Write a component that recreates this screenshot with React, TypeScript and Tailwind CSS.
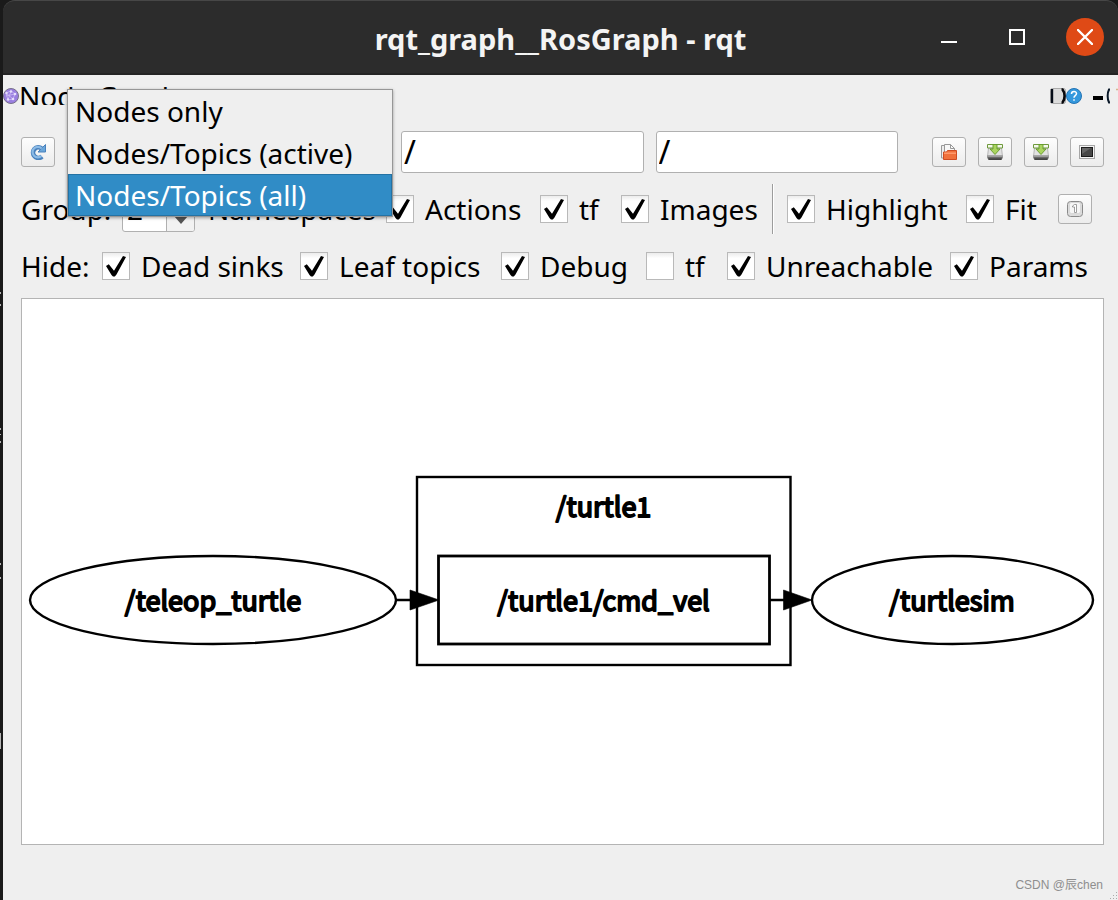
import React from "react";

const TEXT = "font-['Noto_Sans','Open_Sans',sans-serif] text-[28px] leading-[42px]";

const BUTTON =
  "flex h-[30px] w-[34px] shrink-0 items-center justify-center rounded-[3px] border border-[#b0b0b0] bg-linear-to-b from-[#fdfdfd] to-[#ececec]";

function Check({ label, checked = true }: { label: string; checked?: boolean }) {
  return (
    <label className="flex items-center gap-[11px] whitespace-nowrap">
      <span className="grid size-7 shrink-0">
        <input
          type="checkbox"
          defaultChecked={checked}
          className="peer col-start-1 row-start-1 size-7 appearance-none border border-[#b9b9b9] bg-white bg-linear-to-b from-[#ececec] to-white to-20%"
        />
        <svg
          viewBox="0 0 28 28"
          className="pointer-events-none invisible col-start-1 row-start-1 size-7 peer-checked:visible"
          aria-hidden="true"
        >
          <path d="M4 14 6.800 12.200 12 18.800 21 4 24 5 14.500 22.500 12.800 24.500 11 24.500 9.500 23z" fill="#000" />
        </svg>
      </span>
      {label}
    </label>
  );
}

function SaveIcon() {
  return (
    <svg viewBox="0 0 16 16" className="size-4" aria-hidden="true">
      <path d="M1.500 4h13l1 8.500H.5z" fill="#e2e2e2" stroke="#aaa" strokeWidth=".8" />
      <path d="M.5 .5h15v3.500H.5z" fill="#f4f8ec" stroke="#6f9a3c" />
      <path d="M.3 11.500h15.400V14L14.500 15.800h-13L.3 14z" fill="#6a6a6a" />
      <path d="M.3 11.300h15.400v1.500H.3z" fill="#a8a8a8" />
      <path d="M1.500 14.500h13v1.300h-13z" fill="#333" />
      <path d="M6 .5h4v4.500h3L8 10.500 3 5h3z" fill="#a9d45f" stroke="#659a2a" strokeWidth=".9" />
    </svg>
  );
}

function Title() {
  return (
    <header className="flex h-[75px] items-center rounded-t-[12px] border-t border-b-2 border-t-[#474747] border-b-[#242424] bg-[#2c2c2c] pr-[14px]">
      <span className="w-[177px] shrink" />
      <h1 className="flex-1 pt-1 text-center font-['Noto_Sans','Open_Sans',sans-serif] text-[29px] leading-9 font-bold whitespace-nowrap text-[#f4f4f4]">
        rqt_graph__RosGraph - rqt
      </h1>
      <div className="flex items-center">
        <button aria-label="Minimize" className="size-4">
          <svg viewBox="0 0 16 16" className="size-4"><path d="M0 12h16v2H0z" fill="#fff" /></svg>
        </button>
        <button aria-label="Maximize" className="ml-[52px] size-4">
          <svg viewBox="0 0 16 16" className="size-4"><path d="M1 1h14v14H1z" fill="none" stroke="#fff" strokeWidth="2" /></svg>
        </button>
        <button aria-label="Close" className="ml-[41px] flex size-[38px] items-center justify-center rounded-full bg-[#df4a16]">
          <svg viewBox="0 0 16 16" className="size-4"><path d="M1 1l14 14M15 1 1 15" stroke="#fff" strokeWidth="2.4" strokeLinecap="round" /></svg>
        </button>
      </div>
    </header>
  );
}

function Dock() {
  return (
    <div className="flex h-[42px] items-center">
      <svg viewBox="0 0 16 16" className="size-4 shrink-0" aria-hidden="true">
        <circle cx="8" cy="8" r="7.500" fill="#9a7fe0" stroke="#77708a" />
        <path d="M3 5 8 3l4 3-2 5-5 1zM3 5l7 6M8 3l-3 9M12 6 3 8" fill="none" stroke="#cdbdf4" strokeWidth=".8" />
        <g fill="#e6defc"><circle cx="3.500" cy="5" r="1.200" /><circle cx="8" cy="3.500" r="1.200" /><circle cx="12" cy="6" r="1.300" /><circle cx="10" cy="11" r="1.300" /><circle cx="5" cy="11.500" r="1.200" /></g>
      </svg>
      <div className="flex h-[18px] flex-1 items-center overflow-hidden">
        <span className={TEXT}>Node Graph</span>
      </div>
      <button aria-label="Reload" className="size-4">
        <svg viewBox="0 0 16 16" className="size-4">
          <rect x=".5" y=".5" width="15" height="15" rx="2" fill="#dcdcdc" stroke="#aaa" />
          <path d="M2 1v14" stroke="#060c18" strokeWidth="2.400" />
          <path d="M11.500 1.500h1c2.800 3.500 2.800 9.500 0 13h-1" fill="none" stroke="#08080c" strokeWidth="2.600" />
        </svg>
      </button>
      <button aria-label="Help" className="size-4">
        <svg viewBox="0 0 16 16" className="size-4">
          <circle cx="8" cy="8" r="7.500" fill="#3498dd" stroke="#2474b4" />
          <path d="M5.500 6c0-3.400 5-3.200 5-.4C10.500 7.600 8 7.700 8 9.800M8 11.200v1.600" fill="none" stroke="#fff" strokeWidth="1.500" />
        </svg>
      </button>
      <button aria-label="Dock options" className="ml-[11px] h-4 w-[25px]">
        <svg viewBox="0 0 25 16" className="h-4 w-[25px]">
          <path d="M0 8h10v4H0z" fill="#000" />
          <path d="M17 1.500h-1c-1.800 3.500-1.800 9.500 0 13h1" fill="none" stroke="#0a1828" strokeWidth="2" />
          <path d="M23 1.500h2" stroke="#d8b48c" strokeWidth="1.500" />
        </svg>
      </button>
    </div>
  );
}

const MODES = ["Nodes only", "Nodes/Topics (active)", "Nodes/Topics (all)"];

function ModeSelect() {
  return (
    <div className="relative w-[322px] shrink-0">
      <select aria-label="Graph type" defaultValue={MODES[2]} className="h-[42px] w-full rounded-[3px] border border-[#b0b0b0] bg-[#f6f6f6] px-2">
        {MODES.map((m) => <option key={m}>{m}</option>)}
      </select>
      <ul role="listbox" className="absolute -top-[42px] left-0 z-10 w-[326px] border border-[#979797] bg-[#efefef] leading-10 shadow-[0_1px_3px_rgba(0,0,0,0.35)]">
        <li role="option" aria-selected="false" className="h-[42px] border border-transparent px-[6px]">{MODES[0]}</li>
        <li role="option" aria-selected="false" className="h-[42px] border border-transparent px-[6px]">{MODES[1]}</li>
        <li role="option" aria-selected="true" className="h-[42px] border border-[#2472a4] bg-[#308cc6] px-[6px] text-white">{MODES[2]}</li>
      </ul>
    </div>
  );
}

function Toolbar() {
  const field = "h-[42px] w-full min-w-0 flex-1 rounded-[3px] border border-[#b0b0b0] bg-white px-[2px] text-[32px]";
  return (
    <div className="flex items-center gap-3">
      <button aria-label="Refresh" className={BUTTON}>
        <svg viewBox="0 0 16 16" className="size-4">
          <path d="M12 12.500A5.300 5.300 0 1 1 11.700 4.500" fill="none" stroke="#4a82bd" strokeWidth="4.600" />
          <path d="M15.500.500v7.500H8z" fill="#6aa6da" stroke="#4a82bd" />
          <path d="M11.500 12A5.300 5.300 0 1 1 11.700 4.500" fill="none" stroke="#8cbbe6" strokeWidth="2.200" />
        </svg>
      </button>
      <ModeSelect />
      <input aria-label="Node filter" defaultValue="/" className={field} />
      <input aria-label="Topic filter" defaultValue="/" className={field} />
      <div className="ml-[22px] flex gap-3">
        <button aria-label="Load dot file" className={BUTTON}>
          <svg viewBox="0 0 16 16" className="size-4">
            <path d="M.5 1.500h5V14h-5z" fill="#eee" stroke="#999" />
            <path d="M3.500 .5h6l4 4v6h-10z" fill="#f8f8f8" stroke="#999" />
            <path d="M9.500.500V4.500h4" fill="none" stroke="#999" />
            <path d="M2.500 15.500V8h3l1-1.500h9v9z" fill="#f0713c" stroke="#cf4c22" />
            <path d="M3 8.500h12V10H3z" fill="#ff9a6c" />
          </svg>
        </button>
        <button aria-label="Save as dot" className={BUTTON}><SaveIcon /></button>
        <button aria-label="Save as SVG" className={BUTTON}><SaveIcon /></button>
        <button aria-label="Save as image" className={BUTTON}>
          <svg viewBox="0 0 16 16" className="size-4">
            <rect x=".5" y="1.500" width="15" height="13" fill="#f4f4f4" stroke="#a6a6a6" />
            <rect x="2.500" y="3.500" width="11" height="9" fill="#474747" stroke="#1c1c1c" />
            <path d="M3 4h9L3 10z" fill="#666" />
          </svg>
        </button>
      </div>
    </div>
  );
}

function GroupRow() {
  return (
    <div className="grid h-[50px] grid-cols-[101px_86px_178px_154px_81px_151px_15px_179px_92px_1fr] items-center">
      <label htmlFor="depth">Group:</label>
      <div className="flex h-[46px] w-[73px] overflow-hidden rounded-[3px] border border-[#b0b0b0] bg-white">
        <input id="depth" defaultValue="2" className="min-w-0 flex-1 px-1" />
        <button aria-label="Decrease depth" className="flex w-7 items-end justify-center border-l border-[#b0b0b0] bg-[#f2f2f2] pb-[7px]">
          <svg viewBox="0 0 14 8" className="h-2 w-[14px]"><path d="M0 0h14L7 8z" fill="#555" /></svg>
        </button>
      </div>
      <span>Namespaces</span>
      <Check label="Actions" />
      <Check label="tf" />
      <Check label="Images" />
      <span className="h-[50px] w-[2px] border-l border-[#9c9c9c] bg-white" />
      <Check label="Highlight" />
      <Check label="Fit" />
      <button aria-label="Fit in view" className={BUTTON}>
        <svg viewBox="0 0 16 16" className="size-4">
          <rect x=".5" y=".5" width="15" height="15" rx="3" fill="#dcdcdc" stroke="#8a8a8a" />
          <rect x="2.500" y="1.500" width="11" height="11" rx="2" fill="#f6f6f6" stroke="#ccc" strokeWidth=".6" />
          <path d="M5.500 5 7.500 3.500h2v8h-2V6H5.500z" fill="#fff" stroke="#888" strokeWidth=".8" />
        </svg>
      </button>
    </div>
  );
}

function HideRow() {
  return (
    <div className="grid h-[42px] grid-cols-[81px_198px_201px_145px_81px_223px_1fr] items-center">
      <span>Hide:</span>
      <Check label="Dead sinks" />
      <Check label="Leaf topics" />
      <Check label="Debug" />
      <Check label="tf" checked={false} />
      <Check label="Unreachable" />
      <Check label="Params" />
    </div>
  );
}

function Graph() {
  return (
    <main className="flex min-h-0 flex-1 border border-[#b4b4b4] bg-white">
      <svg viewBox="22 299 1081 545" className="w-full" role="img" aria-label="ROS node graph">
        <g fill="none" stroke="#000" strokeWidth="2.4">
          <ellipse cx="213" cy="600" rx="183" ry="44" />
          <ellipse cx="952.500" cy="600" rx="140.500" ry="44" />
          <rect x="417" y="477" width="373.500" height="188" />
          <rect x="438.500" y="556" width="331" height="88" strokeWidth="2.800" />
          <path d="M396 600h16M770 600h16" />
        </g>
        <path d="M410 590 439 600 410 610zM783.500 590 812 600 783.500 610z" stroke="#000" strokeWidth=".6" />
        <g
          className="font-['Noto_Sans_CJK_SC',sans-serif] text-[27px]"
          textAnchor="middle"
          stroke="#000"
          strokeWidth="1.800"
          strokeLinejoin="round"
        >
          <text x="213" y="611">/teleop_turtle</text>
          <text x="603.500" y="517">/turtle1</text>
          <text x="603.500" y="611">/turtle1/cmd_vel</text>
          <text x="952" y="611">/turtlesim</text>
        </g>
      </svg>
    </main>
  );
}

export default function App() {
  return (
    <div className="flex min-h-screen bg-[#1a1a1a]">
      <svg viewBox="0 0 3 800" className="h-[800px] w-[3px] shrink-0" aria-hidden="true">
        <path d="M0 292h1v2H0zM0 304h1v2H0zM0 428h1v2H0zM0 434h1v1H0zM0 441h1v2H0zM0 563h1v2H0zM0 577h1v2H0zM0 733h1v16H0z" fill="#b4b4b4" />
      </svg>
      <div className={`flex min-w-0 flex-1 flex-col text-black ${TEXT}`}>
        <Title />
        <div className="flex flex-1 flex-col bg-[#efefef]">
          <Dock />
          <div className="flex flex-1 flex-col gap-[11px] pt-[14px] pr-[14px] pl-[18px]">
            <Toolbar />
            <GroupRow />
            <HideRow />
            <Graph />
          </div>
          <footer className="flex h-[55px] items-end justify-end">
            <span className="mr-[7px] mb-[7px] font-['Liberation_Sans','Noto_Sans_CJK_SC',sans-serif] text-[12px] leading-4 text-[#8e8e8e]">
              CSDN @辰chen
            </span>
            <svg viewBox="0 0 8 8" className="size-2" aria-hidden="true">
              <path d="M6 0h1v1H6zM3 3h1v1H3zM6 3h1v1H6zM0 6h1v1H0zM3 6h1v1H3zM6 6h1v1H6z" fill="#aaa" />
            </svg>
          </footer>
        </div>
      </div>
    </div>
  );
}
